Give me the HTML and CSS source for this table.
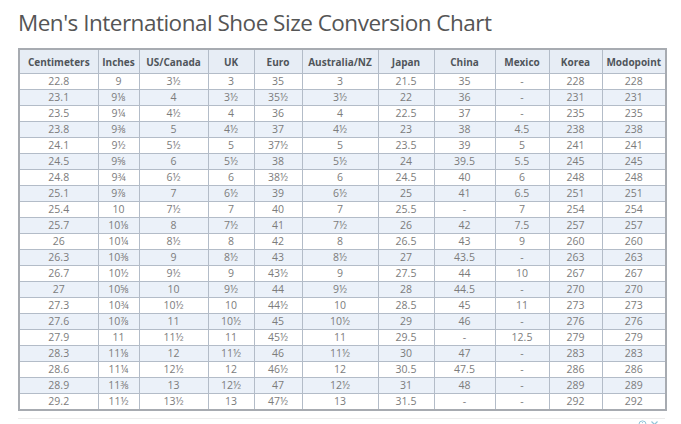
FILE: index.html
```html
<!DOCTYPE html>
<html>
<head>
<meta charset="utf-8">
<link rel="stylesheet" href="styles.css">
</head>
<body>
<h1 class="title">Men's International Shoe Size Conversion Chart</h1>
<table class="chart">
<colgroup>
<col style="width:79px"><col style="width:41px"><col style="width:69px"><col style="width:46px"><col style="width:48px"><col style="width:76px"><col style="width:56px"><col style="width:61px"><col style="width:54px"><col style="width:53px"><col style="width:64px">
</colgroup>
<thead>
<tr><th>Centimeters</th><th>Inches</th><th>US/Canada</th><th>UK</th><th>Euro</th><th>Australia/NZ</th><th>Japan</th><th>China</th><th>Mexico</th><th>Korea</th><th>Modopoint</th></tr>
</thead>
<tbody>
<tr><td>22.8</td><td>9</td><td>3½</td><td>3</td><td>35</td><td>3</td><td>21.5</td><td>35</td><td>-</td><td>228</td><td>228</td></tr>
<tr><td>23.1</td><td>9⅛</td><td>4</td><td>3½</td><td>35½</td><td>3½</td><td>22</td><td>36</td><td>-</td><td>231</td><td>231</td></tr>
<tr><td>23.5</td><td>9¼</td><td>4½</td><td>4</td><td>36</td><td>4</td><td>22.5</td><td>37</td><td>-</td><td>235</td><td>235</td></tr>
<tr><td>23.8</td><td>9⅜</td><td>5</td><td>4½</td><td>37</td><td>4½</td><td>23</td><td>38</td><td>4.5</td><td>238</td><td>238</td></tr>
<tr><td>24.1</td><td>9½</td><td>5½</td><td>5</td><td>37½</td><td>5</td><td>23.5</td><td>39</td><td>5</td><td>241</td><td>241</td></tr>
<tr><td>24.5</td><td>9⅝</td><td>6</td><td>5½</td><td>38</td><td>5½</td><td>24</td><td>39.5</td><td>5.5</td><td>245</td><td>245</td></tr>
<tr><td>24.8</td><td>9¾</td><td>6½</td><td>6</td><td>38½</td><td>6</td><td>24.5</td><td>40</td><td>6</td><td>248</td><td>248</td></tr>
<tr><td>25.1</td><td>9⅞</td><td>7</td><td>6½</td><td>39</td><td>6½</td><td>25</td><td>41</td><td>6.5</td><td>251</td><td>251</td></tr>
<tr><td>25.4</td><td>10</td><td>7½</td><td>7</td><td>40</td><td>7</td><td>25.5</td><td>-</td><td>7</td><td>254</td><td>254</td></tr>
<tr><td>25.7</td><td>10⅛</td><td>8</td><td>7½</td><td>41</td><td>7½</td><td>26</td><td>42</td><td>7.5</td><td>257</td><td>257</td></tr>
<tr><td>26</td><td>10¼</td><td>8½</td><td>8</td><td>42</td><td>8</td><td>26.5</td><td>43</td><td>9</td><td>260</td><td>260</td></tr>
<tr><td>26.3</td><td>10⅜</td><td>9</td><td>8½</td><td>43</td><td>8½</td><td>27</td><td>43.5</td><td>-</td><td>263</td><td>263</td></tr>
<tr><td>26.7</td><td>10½</td><td>9½</td><td>9</td><td>43½</td><td>9</td><td>27.5</td><td>44</td><td>10</td><td>267</td><td>267</td></tr>
<tr><td>27</td><td>10⅝</td><td>10</td><td>9½</td><td>44</td><td>9½</td><td>28</td><td>44.5</td><td>-</td><td>270</td><td>270</td></tr>
<tr><td>27.3</td><td>10¾</td><td>10½</td><td>10</td><td>44½</td><td>10</td><td>28.5</td><td>45</td><td>11</td><td>273</td><td>273</td></tr>
<tr><td>27.6</td><td>10⅞</td><td>11</td><td>10½</td><td>45</td><td>10½</td><td>29</td><td>46</td><td>-</td><td>276</td><td>276</td></tr>
<tr><td>27.9</td><td>11</td><td>11½</td><td>11</td><td>45½</td><td>11</td><td>29.5</td><td>-</td><td>12.5</td><td>279</td><td>279</td></tr>
<tr><td>28.3</td><td>11⅛</td><td>12</td><td>11½</td><td>46</td><td>11½</td><td>30</td><td>47</td><td>-</td><td>283</td><td>283</td></tr>
<tr><td>28.6</td><td>11¼</td><td>12½</td><td>12</td><td>46½</td><td>12</td><td>30.5</td><td>47.5</td><td>-</td><td>286</td><td>286</td></tr>
<tr><td>28.9</td><td>11⅜</td><td>13</td><td>12½</td><td>47</td><td>12½</td><td>31</td><td>48</td><td>-</td><td>289</td><td>289</td></tr>
<tr><td>29.2</td><td>11½</td><td>13½</td><td>13</td><td>47½</td><td>13</td><td>31.5</td><td>-</td><td>-</td><td>292</td><td>292</td></tr>
</tbody>
</table>
<div class="adbar">
  <span class="adicons">
    <svg width="9" height="9" viewBox="0 0 9 9"><circle cx="4.5" cy="4.5" r="3.6" fill="none" stroke="#8fc4d8" stroke-width="1"/><line x1="4.5" y1="4" x2="4.5" y2="6.6" stroke="#8fc4d8" stroke-width="1"/><circle cx="4.5" cy="2.6" r="0.6" fill="#8fc4d8"/></svg>
    <svg width="9" height="9" viewBox="0 0 9 9"><path d="M1.5 1.5 L7.5 7.5 M7.5 1.5 L1.5 7.5" stroke="#8fc4d8" stroke-width="1.1" fill="none"/></svg>
  </span>
</div>
</body>
</html>
```
FILE: styles.css
```css
html, body {
  margin: 0;
  padding: 0;
  background: #fff;
}
body {
  padding: 8px 0 0 18px;
  font-family: "Open Sans", "Liberation Sans", sans-serif;
  overflow: hidden;
}
.title {
  margin: 0;
  font-size: 22.5px;
  font-weight: 400;
  color: #555;
  line-height: 30px;
  letter-spacing: -0.5px;
  height: 40px;
}
.chart {
  border-collapse: collapse;
  table-layout: fixed;
  width: 647px;
  border: 2px solid #a7abb1;
}
.chart th {
  height: 23px;
  padding: 0;
  background: #e7edf5;
  color: #50555b;
  font-size: 10px;
  font-weight: 700;
  text-align: center;
  border: 1px solid #b3bcc8;
  white-space: nowrap;
}
.chart td {
  height: 15px;
  padding: 0;
  color: #7c7c7c;
  font-size: 10.5px;
  line-height: 15px;
  text-align: center;
  border: 1px solid #b3bcc8;
  white-space: nowrap;
}
.chart tbody tr:nth-child(even) td {
  background: #ebf1f9;
}
.adbar {
  position: relative;
  width: 647px;
  margin-top: 7px;
  height: 12px;
  border-top: 1px solid #ececec;
}
.adicons {
  position: absolute;
  right: 6px;
  top: 1px;
  display: flex;
  gap: 3px;
}
```
